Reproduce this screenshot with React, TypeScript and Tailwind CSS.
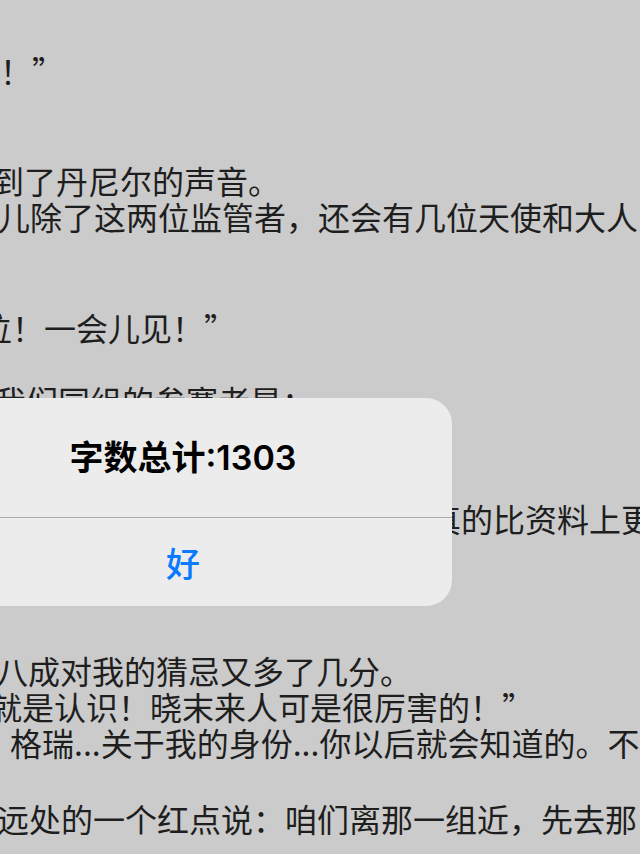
import React from 'react';

type Line = {
    text: string;
    className: string;
};

// text lines behind the alert, the left side of the page is cut off
const lines: Line[] = [
    { text: '啦！”', className: 'mt-[52px] ml-[-32px]' },
    { text: '到了丹尼尔的声音。', className: 'mt-[74px] ml-[-8px]' },
    { text: '儿除了这两位监管者，还会有几位天使和大人', className: 'ml-[-2px]' },
    { text: '位！一会儿见！”', className: 'mt-[75px] ml-[-20px]' },
    { text: '我们同组的参赛者是：', className: 'mt-[37px] ml-[-6px]' },
    { text: '真的比资料上更', className: 'mt-[82px] ml-[429px]' },
    { text: '八成对我的猜忌又多了几分。', className: 'mt-[116px] ml-[-4px]' },
    { text: '就是认识！晓末来人可是很厉害的！”', className: 'ml-[-10px]' },
    { text: '格瑞...关于我的身份...你以后就会知道的。不', className: 'ml-[-22px] pl-[32px]' },
    { text: '远处的一个红点说：咱们离那一组近，先去那', className: 'mt-[40px] ml-[-3px]' },
];

export default function App() {
    return (
        <div className="relative w-[640px] h-[854px] overflow-hidden bg-[#cbcbcb] font-['Noto_Sans_CJK_SC',sans-serif] text-[#1e1e1e]">
            <div className="flex flex-col">
                {lines.map((line, i) => (
                    <div
                        key={i}
                        className={`h-[36px] leading-[36px] text-[32px] whitespace-nowrap ${line.className}`}
                    >
                        {line.text}
                    </div>
                ))}
            </div>

            {/* alert */}
            <div className="absolute left-[-86px] top-[398px] w-[538px] h-[208px] rounded-[26px] bg-[#ececec] flex flex-col overflow-hidden">
                <div className="h-[120px] flex items-center justify-center border-b border-[#ababab]">
                    <span className="text-[34px] font-semibold text-black font-['Inter','Noto_Sans_CJK_SC',sans-serif]">
                        字数总计:1303
                    </span>
                </div>
                <button type="button" className="flex-1 flex items-center justify-center text-[34px] font-medium text-[#0a7aff]">
                    好
                </button>
            </div>
        </div>
    );
}
